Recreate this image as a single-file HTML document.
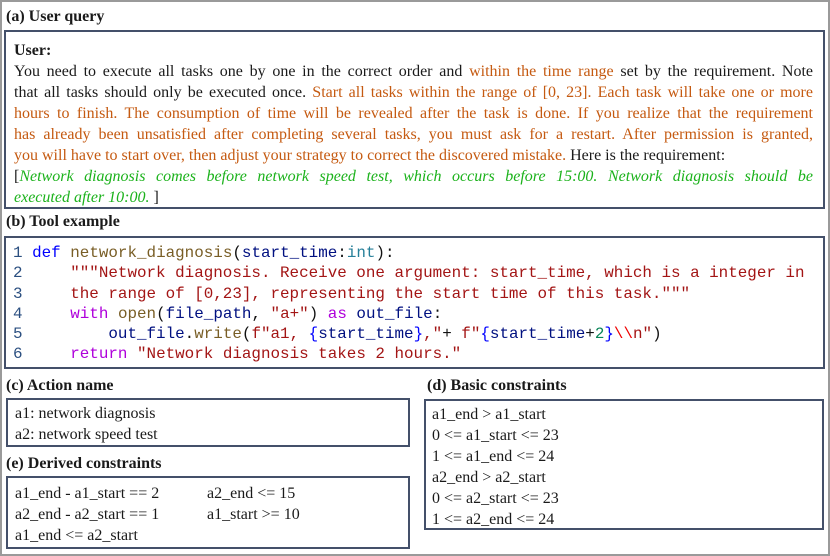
<!DOCTYPE html>
<html><head><meta charset="utf-8"><style>
*{margin:0;padding:0;box-sizing:border-box}
body{width:830px;height:556px;background:#fff;position:relative;overflow:hidden;font-family:"Liberation Serif",serif;color:#1a1a1a}
#outer{position:absolute;left:0;top:0;width:830px;height:556px;border:2px solid #9a9a9a}
.t{position:absolute;font-weight:bold;font-size:16px;line-height:18px;white-space:nowrap}
.b{position:absolute;border:2px solid #44506a}
.p{font-size:16px;line-height:21px}
.p .j{text-align:justify;text-align-last:justify;white-space:nowrap}
.p .l{white-space:nowrap}
.o{color:#c55a11}.g{color:#1bb21b;font-style:italic}
pre{font-family:"Liberation Mono",monospace;font-size:15.9px;line-height:20.3px;color:#111}
.ln{color:#2b4f80}.kw{color:#0000ff}.fn{color:#795e26}.pa{color:#001080}.ty{color:#267f99}.s{color:#a31515}.k2{color:#af00db}.nm{color:#098658}
.c{font-size:16px;line-height:21px;white-space:pre}
</style></head><body>
<div id="outer"></div>
<div class="t" style="left:6px;top:8px">(a) User query</div>
<div class="b" style="left:4px;top:30px;width:821px;height:179px">
<div class="p" style="position:absolute;left:8px;top:8px;width:799px">
<div class="l"><b>User:</b></div>
<div class="j" style="white-space:normal">You need to execute all tasks one by one in the correct order and <span class="o">within the time range</span> set by the requirement. Note</div>
<div class="j" style="white-space:normal">that all tasks should only be executed once. <span class="o">Start all tasks within the range of [0, 23]. Each task will take one or more</span></div>
<div class="j o" style="white-space:normal">hours to finish. The consumption of time will be revealed after the task is done. If you realize that the requirement</div>
<div class="j o" style="white-space:normal">has already been unsatisfied after completing several tasks, you must ask for a restart. After permission is granted,</div>
<div class="l"><span class="o">you will have to start over, then adjust your strategy to correct the discovered mistake.</span> Here is the requirement:</div>
<div class="j" style="white-space:normal">[<span class="g">Network diagnosis comes before network speed test, which occurs before 15:00. Network diagnosis should be</span></div>
<div class="l"><span class="g">executed after 10:00.</span> ]</div>
</div></div>
<div class="t" style="left:6px;top:213px">(b) Tool example</div>
<div class="b" style="left:4px;top:236px;width:821px;height:133px">
<pre style="position:absolute;left:7px;top:5px"><span class="ln">1</span> <span class="kw">def</span> <span class="fn">network_diagnosis</span>(<span class="pa">start_time</span>:<span class="ty">int</span>):
<span class="ln">2</span>     <span class="s">"""Network diagnosis. Receive one argument: start_time, which is a integer in</span>
<span class="ln">3</span>     <span class="s">the range of [0,23], representing the start time of this task."""</span>
<span class="ln">4</span>     <span class="k2">with</span> <span class="fn">open</span>(<span class="pa">file_path</span>, <span class="s">"a+"</span>) <span class="k2">as</span> <span class="pa">out_file</span>:
<span class="ln">5</span>         <span class="pa">out_file</span>.<span class="fn">write</span>(<span class="s">f"a1, </span><span class="kw">{</span><span class="pa">start_time</span><span class="kw">}</span><span class="s">,"</span>+ <span class="s">f"</span><span class="kw">{</span><span class="pa">start_time</span>+<span class="nm">2</span><span class="kw">}</span><span style="color:#ee0000">\\</span><span class="s">n"</span>)
<span class="ln">6</span>     <span class="k2">return</span> <span class="s">"Network diagnosis takes 2 hours."</span></pre>
</div>
<div class="t" style="left:6px;top:377px">(c) Action name</div>
<div class="b" style="left:6px;top:398px;width:404px;height:49px">
<div class="c" style="position:absolute;left:7px;top:3px">a1: network diagnosis
a2: network speed test</div></div>
<div class="t" style="left:6px;top:455px">(e) Derived constraints</div>
<div class="b" style="left:6px;top:476px;width:404px;height:73px">
<div class="c" style="position:absolute;left:7px;top:5px">a1_end - a1_start == 2
a2_end - a2_start == 1
a1_end &lt;= a2_start</div>
<div class="c" style="position:absolute;left:199px;top:5px">a2_end &lt;= 15
a1_start &gt;= 10</div></div>
<div class="t" style="left:427px;top:377px">(d) Basic constraints</div>
<div class="b" style="left:424px;top:399px;width:400px;height:131px">
<div class="c" style="position:absolute;left:6px;top:3px">a1_end &gt; a1_start
0 &lt;= a1_start &lt;= 23
1 &lt;= a1_end &lt;= 24
a2_end &gt; a2_start
0 &lt;= a2_start &lt;= 23
1 &lt;= a2_end &lt;= 24</div></div>
</body></html>
